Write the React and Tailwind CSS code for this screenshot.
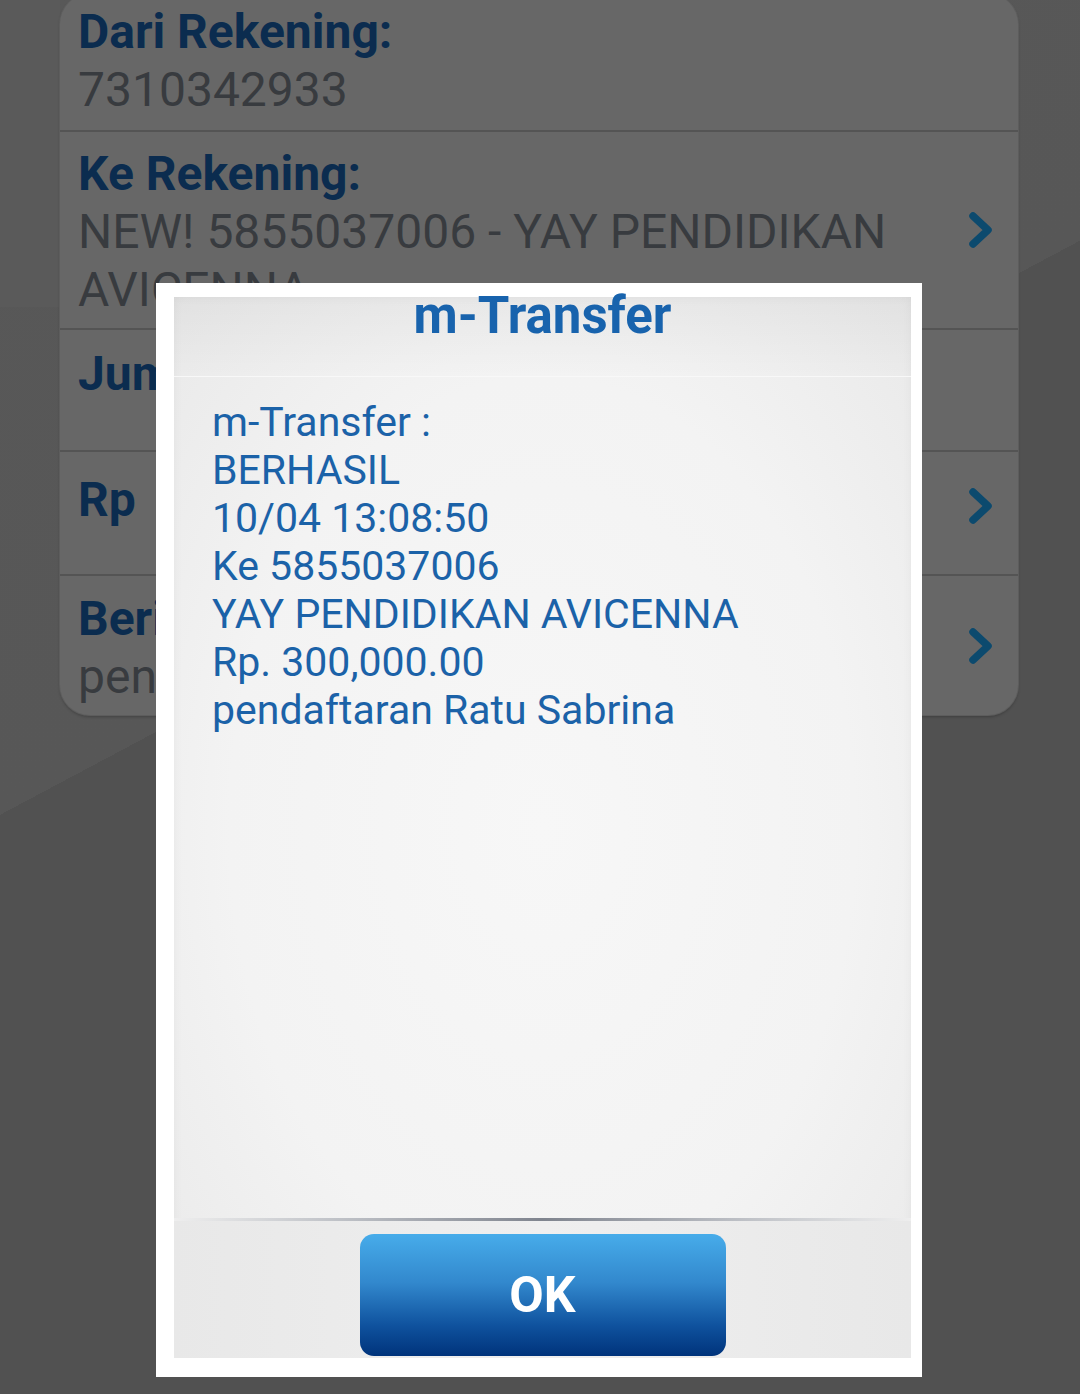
export default function App() {
  const Chevron = () => (
    <svg width="26" height="38" viewBox="0 0 26 38" fill="none">
      <path d="M5 5 L20 19 L5 33" stroke="#0c4a6e" strokeWidth="7.5" strokeLinecap="round" strokeLinejoin="round" />
    </svg>
  );
  const label = "text-[48px] leading-[58px] font-bold text-[#0b2c4f] whitespace-nowrap";
  const value = "text-[48px] leading-[58px] text-[#383b3f] whitespace-nowrap";
  return (
    <div className="relative w-[1080px] h-[1394px] overflow-hidden font-[family-name:Roboto,sans-serif] bg-[linear-gradient(152deg,#585858_0%,#575757_41.4%,#515151_41.4%,#515151_100%)]">
      <div className="absolute left-0 top-0 w-[60px] h-[307px] bg-[#5a5a5a]" />
      <div className="relative ml-[60px] w-[958px] -mt-[6px] rounded-[30px] bg-[#676767] shadow-[0_0_0_1px_#5d5d5d,0_2px_3px_rgba(0,0,0,0.25)] flex flex-col">
        <div className="h-[136px] pt-[9px] pl-[18px] flex flex-col">
          <div className={label}>Dari Rekening:</div>
          <div className={value}>7310342933</div>
        </div>
        <div className="h-[2px] bg-[#545454]" />
        <div className="h-[196px] pl-[18px] pr-[24px] flex items-center">
          <div className="flex-1 self-start pt-[13px] flex flex-col">
            <div className={label}>Ke Rekening:</div>
            <div className={value}>NEW! 5855037006 - YAY PENDIDIKAN</div>
            <div className={value}>AVICENNA</div>
          </div>
          <Chevron />
        </div>
        <div className="h-[2px] bg-[#545454]" />
        <div className="h-[120px] pl-[18px] pt-[15px]">
          <div className={label}>Jumlah:</div>
        </div>
        <div className="h-[2px] bg-[#545454]" />
        <div className="h-[122px] pl-[18px] pr-[24px] flex items-center">
          <div className="flex-1 self-start pt-[19px]">
            <div className={label}>Rp</div>
          </div>
          <div className="-mt-[14px]"><Chevron /></div>
        </div>
        <div className="h-[2px] bg-[#545454]" />
        <div className="h-[139px] pl-[18px] pr-[24px] flex items-center">
          <div className="flex-1 self-start pt-[14px] flex flex-col">
            <div className={label}>Berita:</div>
            <div className={value}>pendaftaran Ratu Sabrina</div>
          </div>
          <Chevron />
        </div>
      </div>

      <div className="absolute left-[156px] top-[283px] w-[766px] h-[1094px] bg-white pl-[18px] pr-[11px] pt-[14px] pb-[19px]">
        <div className="h-full flex flex-col bg-[radial-gradient(ellipse_at_center,#f7f7f7_0%,#f3f3f3_60%,#e9e9e9_100%)] shadow-[inset_0_0_10px_rgba(0,0,0,0.05)]">
          <div className="h-[80px] flex justify-center bg-[linear-gradient(180deg,rgba(0,0,0,0.035)_0%,rgba(0,0,0,0.01)_70%,rgba(0,0,0,0)_100%)] border-b border-[#f8f8f8]">
            <div className="text-[51px] leading-[52px] font-bold text-[#1863ad] -mt-[7px]">m-Transfer</div>
          </div>
          <div className="flex-1 pl-[38px] pt-[21px] text-[41px] leading-[48px] text-[#1b62a8]">
            <div>m-Transfer :</div>
            <div>BERHASIL</div>
            <div>10/04 13:08:50</div>
            <div>Ke 5855037006</div>
            <div>YAY PENDIDIKAN AVICENNA</div>
            <div>Rp. 300,000.00</div>
            <div>pendaftaran Ratu Sabrina</div>
          </div>
          <div className="h-[3px] bg-[linear-gradient(90deg,#eeeeee_0%,#b9bcc2_25%,#7f848e_50%,#b9bcc2_75%,#eeeeee_100%)]" />
          <div className="h-[137px] pt-[13px] flex justify-center bg-[linear-gradient(90deg,#e8e8e8_0%,#efefef_50%,#e8e8e8_100%)]">
            <div className="w-[366px] h-[122px] rounded-[14px] flex items-center justify-center bg-[linear-gradient(180deg,#47acea_0%,#3288cd_40%,#0f529e_75%,#00337b_100%)]">
              <span className="text-[50px] leading-none font-bold text-white">OK</span>
            </div>
          </div>
        </div>
      </div>
    </div>
  );
}
